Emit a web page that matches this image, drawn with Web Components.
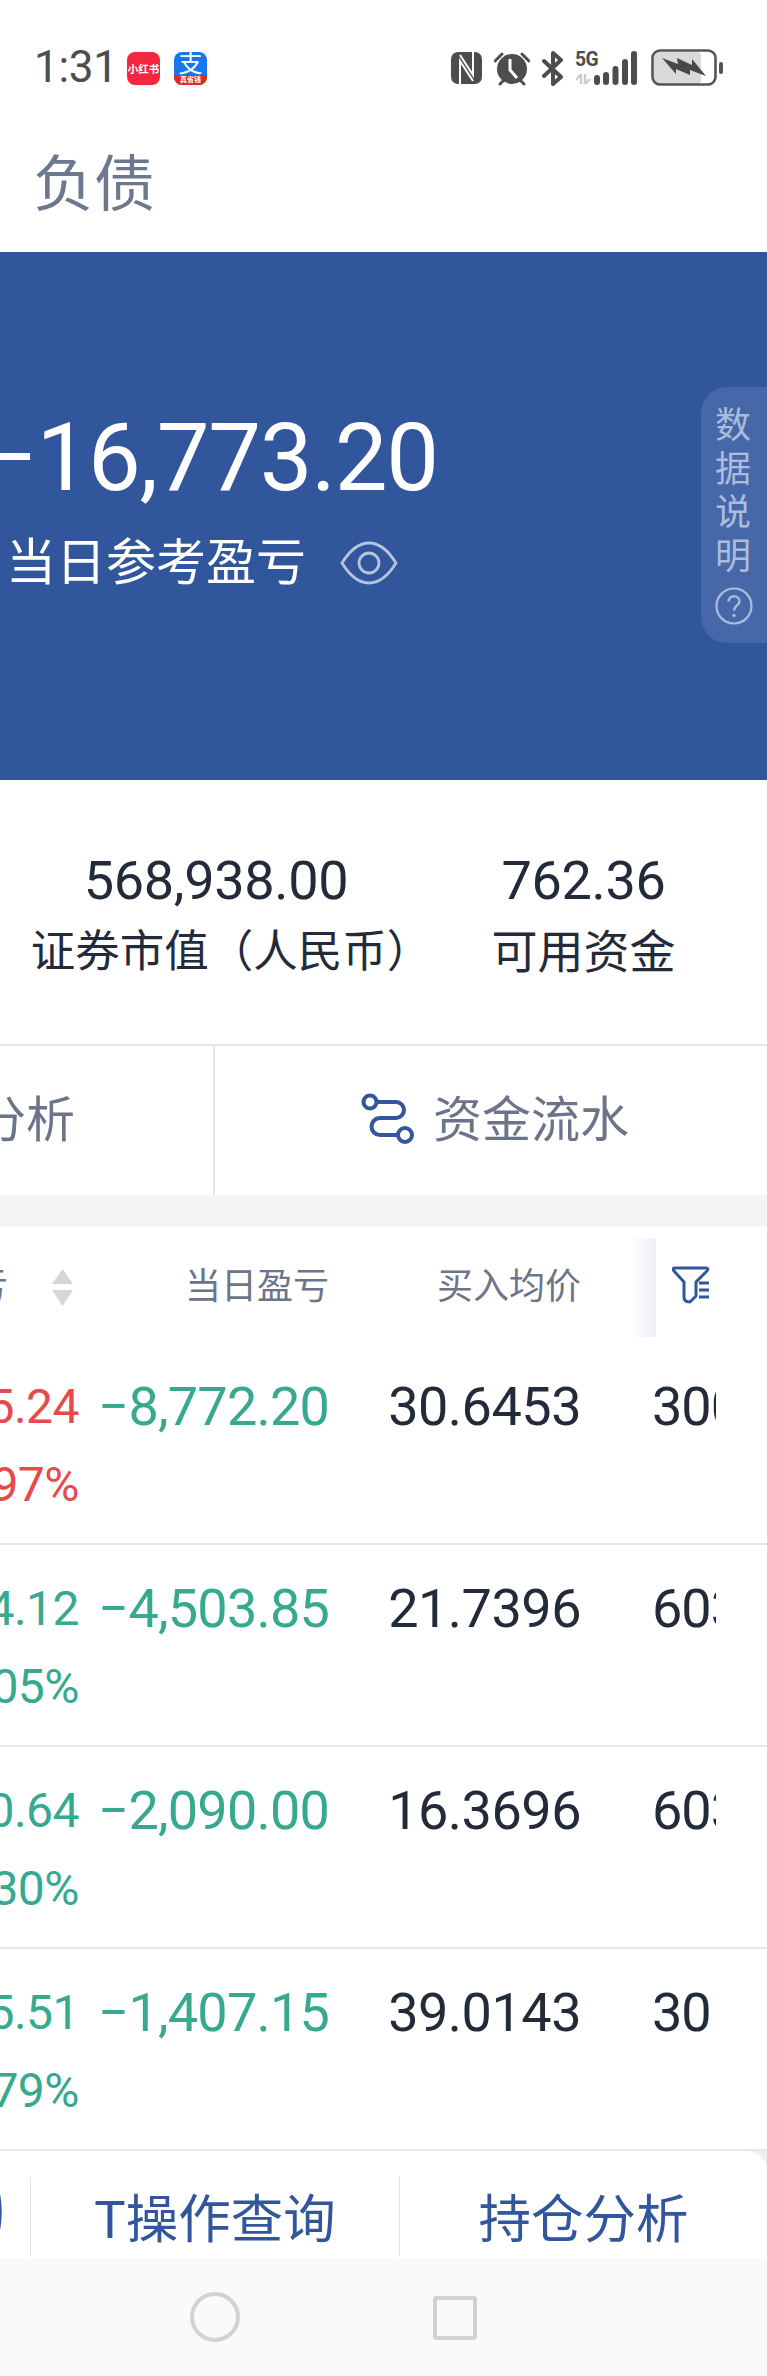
<!DOCTYPE html>
<html lang="zh">
<head>
<meta charset="utf-8">
<title>负债</title>
<style>
  html, body { margin: 0; padding: 0; background: #fff; }
  body { width: 767px; height: 2376px; overflow: hidden; font-family: Roboto, "Noto Sans CJK SC", sans-serif; }
</style>
</head>
<body>
<status-bar></status-bar>
<page-title>负债</page-title>
<hero-panel value="−16,773.20" label="当日参考盈亏"></hero-panel>
<summary-strip>
  <summary-item value="568,938.00" style="--col:368px;margin-left:32px">证券市值（人民币<span style="margin-right:-30px">）</span></summary-item>
  <summary-item value="762.36" style="--col:367px;--label:46px">可用资金</summary-item>
</summary-strip>
<action-tabs></action-tabs>
<holdings-table>
  <holding-row tone="up" a="5.24" b="97%" day="−8,772.20" cost="30.6453" code="300"></holding-row>
  <holding-row tone="down" a="4.12" b="05%" day="−4,503.85" cost="21.7396" code="603"></holding-row>
  <holding-row tone="down" a="0.64" b="30%" day="−2,090.00" cost="16.3696" code="603"></holding-row>
  <holding-row tone="down" a="5.51" b="79%" day="−1,407.15" cost="39.0143" code="30"></holding-row>
</holdings-table>
<bottom-actions></bottom-actions>
<nav-bar></nav-bar>

<script>
const CJK = `Roboto, "Noto Sans CJK SC", sans-serif`;

class StatusBar extends HTMLElement {
  constructor() {
    super();
    this.attachShadow({ mode: "open" });
    this.shadowRoot.innerHTML = `
      <style>
        :host { display: flex; align-items: flex-start; height: 130px; box-sizing: border-box; padding: 49px 0 0 34px; background: #fff; color: #4d4d4d; font-family: ${CJK}; }
        .time { font-size: 44px; line-height: 37px; width: 93px; letter-spacing: -.3px; }
        .app { width: 33px; height: 33px; margin: 3px 14px 0 0; border-radius: 8px; position: relative; overflow: hidden; color: #fff; display: flex; flex-direction: column; align-items: center; justify-content: center; }
        .red { background: #f5263f; font-size: 10.5px; font-weight: 700; white-space: nowrap; }
        .blue { background: #1677f0; justify-content: flex-start; }
        .blue b { font-size: 24px; line-height: 25px; font-weight: 400; }
        .blue i { position: absolute; left: 0; right: 0; bottom: 0; height: 10px; background: #df2a1c; font: 700 7px/10px ${CJK}; text-align: center; }
        .icons { display: flex; align-items: flex-start; margin-left: auto; width: 316px; }
        svg { display: block; flex: none; }
      </style>
      <span class="time">1:31</span>
      <span class="app red">小红书</span>
      <span class="app blue"><b>支</b><i>真省钱</i></span>
      <span class="icons">
        <svg width="31" height="33" viewBox="0 0 31 33" style="margin:3px 12px 0 0">
          <rect width="31" height="32" rx="7" fill="#4d4d4d"/>
          <path d="M9 32V9L22 29M22 0V23L9 3" fill="none" stroke="#fff" stroke-width="2"/>
        </svg>
        <svg width="36" height="35" viewBox="0 0 36 35" style="margin:2px 12px 0 0">
          <circle cx="18" cy="18" r="15" fill="#4d4d4d"/>
          <path d="M16 8V19L23 27" fill="none" stroke="#fff" stroke-width="3"/>
          <path d="M1 10L8 3M28 3L35 10M6 33L10 29M30 33L26 29" stroke="#4d4d4d" stroke-width="3" stroke-linecap="round"/>
        </svg>
        <svg width="21" height="35" viewBox="0 0 21 35" style="margin:2px 12px 0 0">
          <path d="M2 10L19 26L11 33V2L19 9L2 25" fill="none" stroke="#4d4d4d" stroke-width="4" stroke-linecap="round" stroke-linejoin="round"/>
        </svg>
        <span style="width:19px;margin-top:0;position:relative;height:36px">
          <span style="display:block;font:700 21px/21px Roboto,sans-serif;letter-spacing:-.5px;white-space:nowrap;transform:scaleX(.92);transform-origin:left">5G</span>
          <svg width="15" height="10" viewBox="0 0 15 10" style="position:absolute;left:1px;top:25px"><path d="M0 6L5 0V10M9 0V10L14 5" fill="none" stroke="#ccc" stroke-width="2.400"/></svg>
        </span>
        <svg width="43" height="35" viewBox="0 0 43 35" style="margin:2px 14px 0 0">
          <g fill="#4d4d4d">
            <rect x="0" y="24" width="6" height="10" rx="3"/>
            <rect x="9" y="21" width="6" height="13" rx="3"/>
            <rect x="18.500" y="15" width="6" height="19" rx="3"/>
            <rect x="28" y="8" width="6" height="26" rx="3"/>
            <rect x="37" y="0" width="6" height="34" rx="3"/>
          </g>
        </svg>
        <svg width="73" height="38" viewBox="0 0 73 38">
          <rect x="3" y="3" width="47" height="32" rx="4" fill="#d9d9d9"/>
          <rect x="1.500" y="1.500" width="63" height="34" rx="7.500" fill="none" stroke="#555" stroke-width="2.600"/>
          <rect x="68" y="13" width="4" height="12" rx="2" fill="#555"/>
          <path d="M11 9L27 15L26 9L41 16L41 10L55 27L39 21L39 26L25 20L25 25Z" fill="#484848"/>
        </svg>
      </span>
    `;
  }
}
customElements.define("status-bar", StatusBar);

class PageTitle extends HTMLElement {
  constructor() {
    super();
    this.attachShadow({ mode: "open" });
    this.shadowRoot.innerHTML = `
      <style>
        :host { display: block; height: 122px; box-sizing: border-box; padding: 18px 0 0 33px; background: #fff; color: #6b788e; font: 400 61px/74px ${CJK}; }
      </style>
      <slot></slot>
    `;
  }
}
customElements.define("page-title", PageTitle);

class HeroPanel extends HTMLElement {
  constructor() {
    super();
    this.attachShadow({ mode: "open" });
    this.shadowRoot.innerHTML = `
      <style>
        :host { display: block; position: relative; height: 528px; overflow: hidden; background: #31569c; color: #fff; font-family: ${CJK}; }
        .value { margin: 151px 0 0 -16px; font-size: 94px; line-height: 110px; font-weight: 400; letter-spacing: -1.300px; white-space: nowrap; }
        .label { display: flex; align-items: center; gap: 34px; margin: 17px 0 0 6px; font-size: 50px; line-height: 66px; }
        .side { position: absolute; top: 135px; right: 0; width: 66px; height: 256px; box-sizing: border-box; padding-top: 18px; border-radius: 26px 0 0 26px; background: #4768a8; color: #abbcdd; font-size: 36px; line-height: 43.500px; display: flex; flex-direction: column; align-items: flex-start; padding-left: 14px; }
        svg { display: block; }
      </style>
      <div class="value">${this.getAttribute("value")}</div>
      <div class="label">
        <span>${this.getAttribute("label")}</span>
        <svg width="58" height="44" viewBox="0 0 58 44">
          <path d="M2 22C10 9 19 2 29 2S48 9 56 22C48 35 39 42 29 42S10 35 2 22Z" fill="none" stroke="#b6c4e0" stroke-width="2.800"/>
          <circle cx="29" cy="22" r="10" fill="none" stroke="#b6c4e0" stroke-width="2.800"/>
        </svg>
      </div>
      <div class="side">
        <span>数</span><span>据</span><span>说</span><span>明</span>
        <svg width="38" height="38" viewBox="0 0 38 38" style="margin-top:8px">
          <circle cx="19" cy="19" r="17.500" fill="none" stroke="#abbcdd" stroke-width="2.200"/>
          <path d="M13.500 14.500C13.500 7.500 24.500 7.500 24.500 14.500C24.500 18.500 19 18.500 19 23.500" fill="none" stroke="#abbcdd" stroke-width="2.400"/>
          <circle cx="19" cy="28.500" r="1.700" fill="#abbcdd"/>
        </svg>
      </div>
    `;
  }
}
customElements.define("hero-panel", HeroPanel);

class SummaryStrip extends HTMLElement {
  constructor() {
    super();
    this.attachShadow({ mode: "open" });
    this.shadowRoot.innerHTML = `
      <style>
        :host { display: flex; height: 264px; box-sizing: border-box; padding-top: 69px; background: #fff; }
      </style>
      <slot></slot>
    `;
  }
}
customElements.define("summary-strip", SummaryStrip);

class SummaryItem extends HTMLElement {
  constructor() {
    super();
    this.attachShadow({ mode: "open" });
    this.shadowRoot.innerHTML = `
      <style>
        :host { display: flex; flex-direction: column; align-items: center; width: var(--col); color: #232b3a; font-family: ${CJK}; white-space: nowrap; }
        .value { font-size: 54px; line-height: 64px; font-weight: 400; letter-spacing: -.3px; }
        .label { font-size: var(--label, 44.500px); line-height: 58px; margin-top: 10px; }
      </style>
      <div class="value">${this.getAttribute("value")}</div>
      <div class="label"><slot></slot></div>
    `;
  }
}
customElements.define("summary-item", SummaryItem);

class ActionTabs extends HTMLElement {
  constructor() {
    super();
    this.attachShadow({ mode: "open" });
    this.shadowRoot.innerHTML = `
      <style>
        :host { display: grid; grid-template-columns: 215px 1fr; height: 151px; border-top: 2px solid #e6e6e6; box-sizing: border-box; background: #fff; color: #6b7488; font: 400 49px/60px ${CJK}; overflow: hidden; }
        .cell { display: flex; align-items: center; }
        .left { flex: none; display: flex; justify-content: flex-end; width: 75px; white-space: nowrap; }
        .line { flex: none; align-self: stretch; width: 140px; box-sizing: border-box; border-right: 2px solid #e6e6e6; }
        .right { padding-left: 146px; gap: 16px; }
      </style>
      <div class="cell"><span class="left">分析</span><span class="line"></span></div>
      <div class="cell right">
        <svg width="56" height="54" viewBox="0 0 56 54" style="margin-top:-2px">
          <path d="M15 9H35A8 8 0 0 1 35 25H19A8.500 8.500 0 0 0 19 42H37" fill="none" stroke="#31569c" stroke-width="4"/>
          <circle cx="9" cy="9" r="6.500" fill="none" stroke="#31569c" stroke-width="4"/>
          <circle cx="44" cy="42" r="7" fill="none" stroke="#31569c" stroke-width="4"/>
        </svg>
        <span>资金流水</span>
      </div>
    `;
  }
}
customElements.define("action-tabs", ActionTabs);

class HoldingsTable extends HTMLElement {
  constructor() {
    super();
    this.attachShadow({ mode: "open" });
    this.shadowRoot.innerHTML = `
      <style>
        :host { display: block; border-top: 32px solid #f4f4f4; background: #fff; color: #6b7488; font-family: ${CJK}; overflow: hidden; }
        .head { position: relative; display: grid; grid-template-columns: 73px 256px 252px; height: 116px; white-space: nowrap; font-size: 36px; line-height: 44px; }
        .head > * { display: flex; align-items: center; justify-content: flex-end; padding-top: 4px; }
        .sort { gap: 44px; }
        .arrows { flex: none; }
        .head > .shade { position: absolute; left: 631px; top: 11px; width: 25px; height: 99px; padding: 0; background: linear-gradient(to right, #fff, #edf0f7); }
        .head > .filter { position: absolute; left: 672px; top: 39px; padding: 0; }
      </style>
      <div class="head">
        <span class="sort"><span>亏</span>
          <svg class="arrows" width="21" height="37" viewBox="0 0 21 37"><path d="M10.500 0L21 15H0ZM10.500 37L0 21H21Z" fill="#d4d6da"/></svg>
        </span>
        <span>当日盈亏</span>
        <span>买入均价</span>
        <span class="shade"></span>
        <svg class="filter" width="38" height="38" viewBox="0 0 38 38">
          <path d="M3 2H34Q37 2 35 5L24 16V30L18 36Q12 36 12 31V16L2 5Q0 2 3 2Z" fill="none" stroke="#31569c" stroke-width="3" stroke-linejoin="round"/>
          <path d="M27 17H37M27 24H37M27 31H37" stroke="#31569c" stroke-width="3"/>
        </svg>
      </div>
      <slot></slot>
    `;
  }
}
customElements.define("holdings-table", HoldingsTable);

class HoldingRow extends HTMLElement {
  constructor() {
    super();
    this.attachShadow({ mode: "open" });
    const tone = this.getAttribute("tone") === "up" ? "#e8494a" : "#36a98e";
    this.shadowRoot.innerHTML = `
      <style>
        :host { display: grid; grid-template-columns: 79px 250px 252px 71px 64px; height: 202px; box-sizing: border-box; border-bottom: 2px solid #e6e6e6; white-space: nowrap; font-family: ${CJK}; font-weight: 400; }
        .n { display: flex; justify-content: flex-end; font-size: 54px; line-height: 64px; height: 64px; margin-top: 32px; }
        .pair { display: flex; flex-direction: column; align-items: flex-end; color: ${tone}; font-size: 48px; line-height: 64px; padding-top: 32px; letter-spacing: -.5px; }
        .pair span:last-child { margin-top: 14px; }
        .day { color: #36a98e; letter-spacing: -.8px; }
        .cost { color: #232b3a; letter-spacing: -.5px; }
        .code { color: #232b3a; grid-column: 5; justify-content: flex-start; overflow: hidden; letter-spacing: -1px; }
      </style>
      <div class="pair"><span>${this.getAttribute("a")}</span><span>${this.getAttribute("b")}</span></div>
      <div class="n day">${this.getAttribute("day")}</div>
      <div class="n cost">${this.getAttribute("cost")}</div>
      <div></div>
      <div class="n code">${this.getAttribute("code")}</div>
    `;
  }
}
customElements.define("holding-row", HoldingRow);

class BottomActions extends HTMLElement {
  constructor() {
    super();
    this.attachShadow({ mode: "open" });
    this.shadowRoot.innerHTML = `
      <style>
        :host { display: block; height: 107px; background: #f0f0f0; font-family: ${CJK}; }
        .bar { display: grid; grid-template-columns: 31px 369px 1fr; height: 100%; box-sizing: border-box; padding-top: 26px; background: #fff; border-top-right-radius: 20px; color: #31569c; font-size: 52.500px; line-height: 86px; text-align: center; white-space: nowrap; }
        .bar > * { border-right: 1px solid #e3e3e3; height: 80px; }
        .bar > :last-child { border-right: 0; }
        svg { display: block; }
      </style>
      <div class="bar">
        <div><svg width="3" height="36" viewBox="0 0 3 36" style="margin-top:17px"><path d="M-1 1Q2 18 -1 35" fill="none" stroke="#31569c" stroke-width="2.500"/></svg></div>
        <div>T操作查询</div>
        <div>持仓分析</div>
      </div>
    `;
  }
}
customElements.define("bottom-actions", BottomActions);

class NavBar extends HTMLElement {
  constructor() {
    super();
    this.attachShadow({ mode: "open" });
    this.shadowRoot.innerHTML = `
      <style>
        :host { display: flex; align-items: flex-start; height: 118px; box-sizing: border-box; padding: 34px 0 0 190px; gap: 193px; background: #fafafa; }
        .circle { width: 50px; height: 50px; box-sizing: border-box; border: 4px solid #d2d2d2; border-radius: 50%; }
        .square { width: 44px; height: 44px; box-sizing: border-box; margin-top: 4px; border: 4px solid #d2d2d2; border-radius: 3px; }
      </style>
      <span class="circle"></span>
      <span class="square"></span>
    `;
  }
}
customElements.define("nav-bar", NavBar);
</script>
</body>
</html>
